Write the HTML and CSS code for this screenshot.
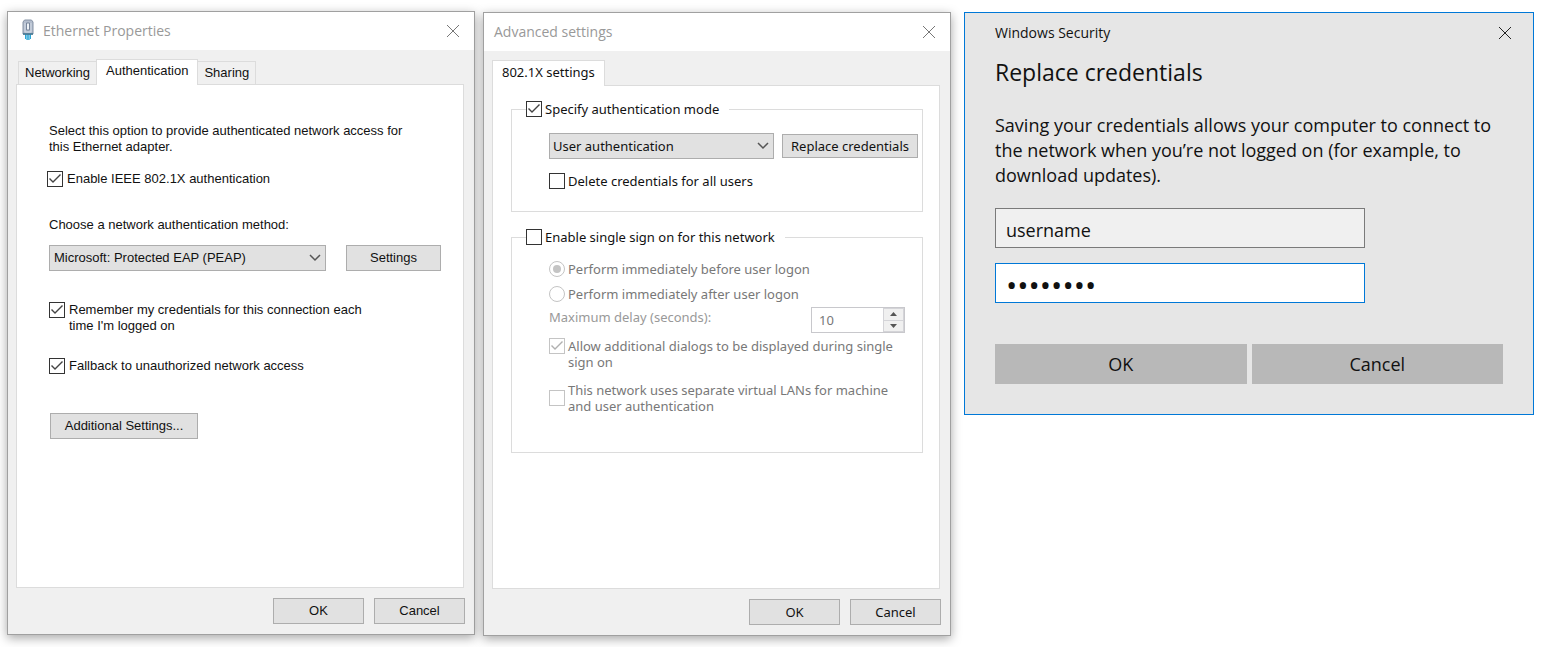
FILE: index.html
```html
<!DOCTYPE html>
<html lang="en">
<head>
<meta charset="utf-8">
<title>Ethernet Properties</title>
<link rel="stylesheet" href="styles.css">
</head>
<body>
<main class="desktop">

  <section class="dialog dialog-ethernet" aria-labelledby="ethernet-title">
    <header class="titlebar">
      <svg class="plug-icon" width="12" height="22" viewBox="0 0 12 22" aria-hidden="true">
        <path d="M3 15h6v5H8v1H4v-1H3z" fill="#7cc9e6"/>
        <path d="M3.500 15v5M6 15v6M8.500 15v5" stroke="#2aa5d6" stroke-width="1" fill="none"/>
        <path d="M2.500 1h7L11 3v12H1V3z" fill="#b3bdcd" stroke="#8592a5"/>
        <path d="M3 4v9h6V4" fill="none" stroke="#d2dae5"/>
        <path d="M4.500 4v7h3V4z" fill="#eef2f7" stroke="#77859a"/>
        <path d="M1 15h10" stroke="#3c7591" stroke-width="1.500"/>
      </svg>
      <h1 class="title" id="ethernet-title">Ethernet Properties</h1>
      <button class="close" type="button" aria-label="Close"><svg width="14" height="14" viewBox="0 0 14 14"><path d="M1 1l12 12M13 1L1 13"/></svg></button>
    </header>
    <div class="tabs" role="tablist">
      <button class="tab" type="button" role="tab">Networking</button>
      <button class="tab tab-active" type="button" role="tab" aria-selected="true">Authentication</button>
      <button class="tab" type="button" role="tab">Sharing</button>
    </div>
    <div class="page page-ethernet" role="tabpanel">
      <p class="intro">Select this option to provide authenticated network access for<br>this Ethernet adapter.</p>
      <label class="option enable"><input class="check" type="checkbox" checked><span>Enable IEEE 802.1X authentication</span></label>
      <label class="method-label" for="method">Choose a network authentication method:</label>
      <div class="method-row">
        <div class="select-wrap">
          <select class="select" id="method"><option>Microsoft: Protected EAP (PEAP)</option></select>
          <svg class="chevron" width="12" height="8" viewBox="0 0 12 8" aria-hidden="true"><path d="M1 1l5 5 5-5"/></svg>
        </div>
        <button class="button settings" type="button">Settings</button>
      </div>
      <label class="option remember"><input class="check" type="checkbox" checked><span>Remember my credentials for this connection each<br>time I'm logged on</span></label>
      <label class="option fallback"><input class="check" type="checkbox" checked><span>Fallback to unauthorized network access</span></label>
      <button class="button additional" type="button">Additional Settings...</button>
    </div>
    <footer class="actions">
      <button class="button" type="button">OK</button>
      <button class="button" type="button">Cancel</button>
    </footer>
  </section>

  <section class="dialog dialog-advanced" aria-labelledby="advanced-title">
    <header class="titlebar">
      <h1 class="title" id="advanced-title">Advanced settings</h1>
      <button class="close" type="button" aria-label="Close"><svg width="14" height="14" viewBox="0 0 14 14"><path d="M1 1l12 12M13 1L1 13"/></svg></button>
    </header>
    <div class="tabs" role="tablist">
      <button class="tab tab-active" type="button" role="tab" aria-selected="true">802.1X settings</button>
    </div>
    <div class="page page-advanced" role="tabpanel">
      <fieldset class="group">
        <legend class="legend"><label class="option"><input class="check" type="checkbox" checked><span>Specify authentication mode</span></label></legend>
        <div class="mode-row">
          <div class="select-wrap">
            <select class="select" aria-label="Authentication mode"><option>User authentication</option></select>
            <svg class="chevron" width="12" height="8" viewBox="0 0 12 8" aria-hidden="true"><path d="M1 1l5 5 5-5"/></svg>
          </div>
          <button class="button replace" type="button">Replace credentials</button>
        </div>
        <label class="option"><input class="check" type="checkbox"><span>Delete credentials for all users</span></label>
      </fieldset>
      <fieldset class="group group-sso">
        <legend class="legend"><label class="option"><input class="check" type="checkbox"><span>Enable single sign on for this network</span></label></legend>
        <label class="option disabled"><input class="radio" type="radio" name="when" checked disabled><span>Perform immediately before user logon</span></label>
        <label class="option disabled after"><input class="radio" type="radio" name="when" disabled><span>Perform immediately after user logon</span></label>
        <div class="delay">
          <label class="delay-label" for="delay">Maximum delay (seconds):</label>
          <div class="spinner">
            <input class="spinner-value" id="delay" type="text" value="10" disabled>
            <div class="spinner-buttons">
              <button class="spin" type="button" aria-label="Increase" disabled><svg width="7" height="4" viewBox="0 0 7 4"><path d="M0 4l3.500-4L7 4z"/></svg></button>
              <button class="spin" type="button" aria-label="Decrease" disabled><svg width="7" height="4" viewBox="0 0 7 4"><path d="M0 0l3.500 4L7 0z"/></svg></button>
            </div>
          </div>
        </div>
        <label class="option disabled allow"><input class="check" type="checkbox" checked disabled><span>Allow additional dialogs to be displayed during single<br>sign on</span></label>
        <label class="option disabled vlan"><input class="check" type="checkbox" disabled><span>This network uses separate virtual LANs for machine<br>and user authentication</span></label>
      </fieldset>
    </div>
    <footer class="actions">
      <button class="button" type="button">OK</button>
      <button class="button" type="button">Cancel</button>
    </footer>
  </section>

  <section class="security" aria-labelledby="security-title">
    <header class="security-bar">
      <span>Windows Security</span>
      <button class="close" type="button" aria-label="Close"><svg width="12" height="12" viewBox="0 0 12 12"><path d="M0 0l12 12M12 0L0 12"/></svg></button>
    </header>
    <h1 class="security-title" id="security-title">Replace credentials</h1>
    <p class="security-text">Saving your credentials allows your computer to connect to the network when you’re not logged on (for example, to download updates).</p>
    <input class="field" type="text" value="username" aria-label="User name">
    <input class="field field-focus" type="password" value="password" aria-label="Password">
    <div class="security-actions">
      <button class="wide" type="button">OK</button>
      <button class="wide" type="button">Cancel</button>
    </div>
  </section>

</main>
</body>
</html>
```
FILE: styles.css
```css
* { box-sizing: border-box; }

body { margin: 0; background: #fff; color: #111; }

button, input, select { font: inherit; color: inherit; margin: 0; }

p, h1 { margin: 0; font-weight: 400; }

.desktop {
  display: grid;
  grid-template-columns: minmax(0, 468fr) minmax(0, 468fr) minmax(0, 575fr);
  column-gap: 8px;
  align-items: start;
  padding: 11px 17px 11px 7px;
}

/* Property-sheet dialogs */
.dialog {
  border: 1px solid #a0a0a0;
  background: #f0f0f0;
  box-shadow: 0 3px 10px rgba(0, 0, 0, 0.35);
  font-size: 13px;
  line-height: 16px;
}
.dialog-ethernet { font-family: "Liberation Sans", Arial, sans-serif; }
.dialog-advanced { font-family: "Noto Sans", Tahoma, sans-serif; margin-top: 1px; }

.titlebar {
  display: flex;
  align-items: center;
  height: 38px;
  padding: 0 14px 0 10px;
  background: #fff;
  color: #999;
}
.plug-icon { margin: 0 9px 2px 4px; }
.title { flex: 1; font: 14px/20px "Open Sans", "Segoe UI", sans-serif; }
.close {
  display: flex;
  padding: 0;
  border: 0;
  background: none;
}
.close path { fill: none; stroke: #777; stroke-width: 1; }

.tabs { display: flex; align-items: flex-end; height: 34px; padding: 0 8px; }
.dialog-ethernet .tabs { padding: 0 10px; }
.tab {
  height: 23px;
  padding: 0 6px;
  border: 1px solid #dcdcdc;
  border-bottom: 0;
  background: #f0f0f0;
  white-space: nowrap;
}
.tab + .tab-active, .tab-active + .tab { margin-left: -1px; }
.tab-active {
  position: relative;
  height: 26px;
  margin-bottom: -1px;
  padding: 0 9px 3px;
  background: #fff;
}
.page {
  height: 504px;
  margin: 0 10px 0 8px;
  border: 1px solid #dcdcdc;
  background: #fff;
}
.page-ethernet { display: flex; flex-direction: column; align-items: flex-start; padding: 38px 22px 0 32px; }
.page-advanced { padding: 15px 16px 0 18px; }

.option { display: flex; align-items: flex-start; gap: 4px; }
.check, .radio {
  appearance: none;
  flex: none;
  width: 16px;
  height: 16px;
  border: 1px solid #333;
  background: #fff;
}
.check:checked::before {
  content: "";
  display: block;
  width: 14px;
  height: 14px;
  background: #444;
  clip-path: polygon(1px 7px, 2px 6px, 5px 9px, 12px 2px, 13px 3px, 5px 11px);
}
.radio { display: grid; place-items: center; border-radius: 50%; }
.radio:checked::before { content: ""; width: 8px; height: 8px; border-radius: 50%; background: #c4c4c4; }
.check:disabled, .radio:disabled { border-color: #c4c4c4; }
.check:disabled:checked::before { background: #b0b0b0; }
.disabled { color: #787878; }
.dialog-advanced .option { gap: 3px; }

.button {
  height: 26px;
  padding: 0;
  border: 1px solid #adadad;
  background: #e1e1e1;
  white-space: nowrap;
}
.select-wrap { display: grid; align-items: center; flex: 1; min-width: 0; }
.select {
  grid-area: 1 / 1;
  appearance: none;
  width: 100%;
  height: 26px;
  padding: 0 24px 0 4px;
  border: 1px solid #adadad;
  border-radius: 0;
  background: #e1e1e1;
}
.chevron { grid-area: 1 / 1; justify-self: end; margin-right: 5px; pointer-events: none; }
.chevron path { fill: none; stroke: #555; stroke-width: 1.5; }

.enable { margin: 16px 0 0 -2px; }
.method-label { margin-top: 30px; }
.method-row { display: flex; gap: 20px; width: 100%; margin-top: 12px; }
.settings { width: 95px; }
.remember { margin-top: 31px; }
.fallback { margin-top: 24px; }
.additional { width: 148px; margin: 39px 0 0 1px; }

.actions { display: flex; justify-content: flex-end; gap: 10px; padding: 10px 9px; }
.actions .button { width: 91px; }

.group { min-width: 0; margin: 0; padding: 16px 4px 22px 37px; border: 1px solid #dcdcdc; }
.legend { margin-left: -23px; padding: 0 10px 0 0; }
.mode-row { display: flex; align-items: center; gap: 8px; margin-bottom: 14px; }
.mode-row .select { padding-left: 3px; }
.replace { width: 136px; height: 24px; }
.group-sso { margin-top: 17px; padding-right: 17px; padding-bottom: 38px; }
.after { margin-top: 9px; }
.delay { display: flex; justify-content: space-between; margin-top: 5px; color: #999; }
.delay-label { margin-top: 2px; }
.spinner { display: flex; width: 94px; height: 26px; border: 1px solid #c8c8cc; background: #fff; color: #787878; }
.spinner-value { flex: 1; min-width: 0; padding: 0 7px; border: 0; background: none; }
.spinner-buttons { display: grid; gap: 1px; width: 21px; padding: 1px; background: #d4d4d8; }
.spin { display: grid; place-items: center; padding: 0; border: 0; background: #f0f0f0; }
.spin path { fill: #555; }
.allow { margin-top: 5px; }
.vlan { align-items: center; margin-top: 12px; }

/* Credential prompt */
.security {
  margin: 1px 0 0 5px;
  padding: 10px 30px 30px;
  border: 1px solid #0078d7;
  background: #e6e6e6;
  font: 18px/25px "Open Sans", "Segoe UI", sans-serif;
}
.security-bar { display: flex; justify-content: space-between; margin-right: -8px; font-size: 14px; line-height: 20px; align-items: center; }
.security .close path { stroke: #222; }
.security-title { margin-top: 12px; font-size: 23px; line-height: 34px; }
.security-text { margin-top: 24px; }
.field {
  display: block;
  width: 370px;
  max-width: 100%;
  height: 40px;
  margin-top: 20px;
  padding: 3px 10px 0;
  border: 1px solid #7a7a7a;
  background: #f0f0f0;
}
.field-focus { margin-top: 15px; border-color: #0078d7; background: #fff; font-size: 30px; }
.security-actions { display: grid; grid-template-columns: 1fr 1fr; gap: 5px; margin-top: 41px; }
.wide { height: 40px; padding: 0; border: 0; background: #b8b8b8; }
```
